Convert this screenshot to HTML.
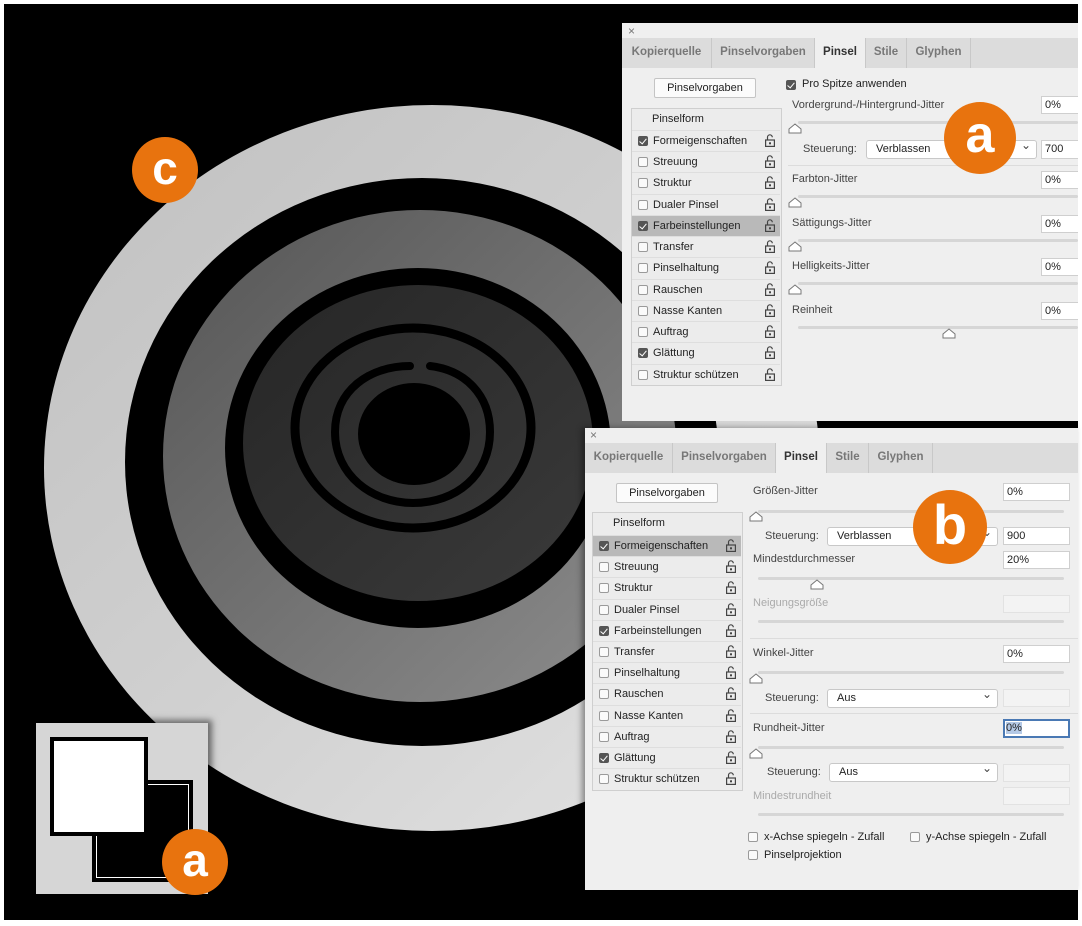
<!DOCTYPE html>
<html><head><meta charset="utf-8"><style>
*{margin:0;padding:0;box-sizing:border-box}
body{width:1082px;height:926px;background:#fff;position:relative;overflow:hidden;font-family:"Liberation Sans",sans-serif;font-size:11px;color:#333}
.a{position:absolute}
.panel{position:absolute;background:#efefef;overflow:hidden}
.tb{position:absolute;top:0;height:100%;background:#dcdcdc;border-right:1px solid #c8c8c8;color:#777;font-weight:bold;font-size:11.5px;text-align:center;line-height:29px}
.tb.on{background:#efefef;color:#333}
.btn{position:absolute;background:#fbfbfb;border:1px solid #c4c4c4;border-radius:2px;text-align:center;line-height:18px;color:#222}
.list{position:absolute;border:1px solid #cfcfcf;background:#ececec}
.r{position:absolute;left:0;width:148px;height:21px;border-top:1px solid #dedede;line-height:20px;padding-left:21px;color:#222}
.r.sel{background:#b9b9b9}
.cb{position:absolute;width:10px;height:10px;border:1px solid #9a9a9a;border-radius:2px;background:#fafafa}
.cb.ck{background:#555;border-color:#555}
.cb.ck:after{content:"";position:absolute;left:2px;top:0px;width:3px;height:6px;border:solid #fff;border-width:0 1.5px 1.5px 0;transform:rotate(40deg)}
.r .cb{left:6px;top:5px}
.lk{position:absolute;right:5px;top:3px}
.lbl{position:absolute;color:#444}
.dis{color:#aaa}
.in{position:absolute;background:#fff;border:1px solid #cfcfcf;padding-left:3px;line-height:16px;color:#222}
.in.d{background:#f3f3f3;border-color:#e2e2e2}
.sl{position:absolute;height:3px;background:#d6d6d6;border-radius:2px}
.th{position:absolute;width:14px;height:11px}
.sel2{position:absolute;background:#fff;border:1px solid #c8c8c8;border-radius:3px;padding-left:9px;line-height:17px;color:#222}
.sel2:after{content:"⌄";position:absolute;right:5px;top:-4px;font-size:12px;color:#444}
.dv{position:absolute;height:1px;background:#dcdcdc}
.or{position:absolute;border-radius:50%;background:#e8730e;color:#fff;font-weight:bold;text-align:center;font-family:"Liberation Sans",sans-serif}
</style></head><body>
<div class="a" style="left:4px;top:4px;width:1074px;height:916px;background:#000"></div>
<svg class="a" style="left:0;top:0" width="1082" height="926">
<defs>
<linearGradient id="g1" x1="0" y1="0" x2="1" y2="1"><stop offset="0" stop-color="#c0c0c0"/><stop offset="0.5" stop-color="#d0d0d0"/><stop offset="1" stop-color="#e4e4e4"/></linearGradient>
<linearGradient id="g2" x1="0" y1="0" x2="1" y2="1"><stop offset="0" stop-color="#555"/><stop offset="1" stop-color="#8e8e8e"/></linearGradient>
<linearGradient id="g3" x1="0" y1="0" x2="1" y2="1"><stop offset="0" stop-color="#262626"/><stop offset="1" stop-color="#3a3a3a"/></linearGradient>
</defs>
<ellipse cx="432" cy="468" rx="388" ry="363" fill="url(#g1)"/>
<ellipse cx="422" cy="462" rx="297" ry="284" fill="#000"/>
<ellipse cx="420" cy="456" rx="257" ry="246" fill="url(#g2)"/>
<ellipse cx="418" cy="448" rx="193" ry="180" fill="#000"/>
<ellipse cx="418" cy="443" rx="175" ry="158" fill="url(#g3)"/>
<ellipse cx="413" cy="428" rx="118" ry="100" fill="none" stroke="#000" stroke-width="9"/>
<path d="M410 366 C370 366 335 390 335 432 C335 475 372 503 413 503 C456 503 490 475 490 432 C490 395 465 370 430 366" fill="none" stroke="#000" stroke-width="8" stroke-linecap="round"/>
<ellipse cx="414" cy="434" rx="56" ry="51" fill="#000"/>
</svg>
<!-- inset -->
<div class="a" style="left:36px;top:723px;width:172px;height:171px;background:#d6d6d6;box-shadow:4px -3px 6px rgba(0,0,0,.5)"></div>
<div class="a" style="left:92px;top:780px;width:101px;height:102px;background:#000"></div>
<div class="a" style="left:96px;top:784px;width:93px;height:94px;border:1.5px solid #fff"></div>
<div class="a" style="left:50px;top:737px;width:98px;height:99px;background:#fff;border:4px solid #000"></div>

<!-- panel 1 -->
<div class="panel" style="left:622px;top:23px;width:456px;height:398px">
 <div class="a" style="left:6px;top:1px;color:#777;font-size:12px">×</div>
 <div class="a" style="left:0;top:15px;width:456px;height:30px;background:#dcdcdc">
  <div class="tb" style="left:0;width:90px">Kopierquelle</div>
  <div class="tb" style="left:90px;width:103px">Pinselvorgaben</div>
  <div class="tb on" style="left:193px;width:51px">Pinsel</div>
  <div class="tb" style="left:244px;width:41px">Stile</div>
  <div class="tb" style="left:285px;width:64px">Glyphen</div>
 </div>
 <div class="btn" style="left:32px;top:55px;width:102px;height:20px">Pinselvorgaben</div>
 <div class="list" style="left:9px;top:85px;width:151px;height:278px">
  <div class="r" style="top:0;border-top:0;padding-left:20px">Pinselform</div>
  <div class="r" style="top:21px"><span class="cb ck"></span>Formeigenschaften<svg class="lk" width="10" height="13"><path d="M2.5 6V3.2a2.4 2.4 0 0 1 4.8 0" fill="none" stroke="#444" stroke-width="1.2"/><rect x="0.6" y="6" width="8.8" height="6.4" fill="none" stroke="#444" stroke-width="1.2"/><rect x="4" y="8.3" width="2" height="2" fill="#444"/></svg></div>
  <div class="r" style="top:42px"><span class="cb"></span>Streuung<svg class="lk" width="10" height="13"><path d="M2.5 6V3.2a2.4 2.4 0 0 1 4.8 0" fill="none" stroke="#444" stroke-width="1.2"/><rect x="0.6" y="6" width="8.8" height="6.4" fill="none" stroke="#444" stroke-width="1.2"/><rect x="4" y="8.3" width="2" height="2" fill="#444"/></svg></div>
  <div class="r" style="top:63px"><span class="cb"></span>Struktur<svg class="lk" width="10" height="13"><path d="M2.5 6V3.2a2.4 2.4 0 0 1 4.8 0" fill="none" stroke="#444" stroke-width="1.2"/><rect x="0.6" y="6" width="8.8" height="6.4" fill="none" stroke="#444" stroke-width="1.2"/><rect x="4" y="8.3" width="2" height="2" fill="#444"/></svg></div>
  <div class="r" style="top:85px"><span class="cb"></span>Dualer Pinsel<svg class="lk" width="10" height="13"><path d="M2.5 6V3.2a2.4 2.4 0 0 1 4.8 0" fill="none" stroke="#444" stroke-width="1.2"/><rect x="0.6" y="6" width="8.8" height="6.4" fill="none" stroke="#444" stroke-width="1.2"/><rect x="4" y="8.3" width="2" height="2" fill="#444"/></svg></div>
  <div class="r sel" style="top:106px"><span class="cb ck"></span>Farbeinstellungen<svg class="lk" width="10" height="13"><path d="M2.5 6V3.2a2.4 2.4 0 0 1 4.8 0" fill="none" stroke="#444" stroke-width="1.2"/><rect x="0.6" y="6" width="8.8" height="6.4" fill="none" stroke="#444" stroke-width="1.2"/><rect x="4" y="8.3" width="2" height="2" fill="#444"/></svg></div>
  <div class="r" style="top:127px"><span class="cb"></span>Transfer<svg class="lk" width="10" height="13"><path d="M2.5 6V3.2a2.4 2.4 0 0 1 4.8 0" fill="none" stroke="#444" stroke-width="1.2"/><rect x="0.6" y="6" width="8.8" height="6.4" fill="none" stroke="#444" stroke-width="1.2"/><rect x="4" y="8.3" width="2" height="2" fill="#444"/></svg></div>
  <div class="r" style="top:148px"><span class="cb"></span>Pinselhaltung<svg class="lk" width="10" height="13"><path d="M2.5 6V3.2a2.4 2.4 0 0 1 4.8 0" fill="none" stroke="#444" stroke-width="1.2"/><rect x="0.6" y="6" width="8.8" height="6.4" fill="none" stroke="#444" stroke-width="1.2"/><rect x="4" y="8.3" width="2" height="2" fill="#444"/></svg></div>
  <div class="r" style="top:170px"><span class="cb"></span>Rauschen<svg class="lk" width="10" height="13"><path d="M2.5 6V3.2a2.4 2.4 0 0 1 4.8 0" fill="none" stroke="#444" stroke-width="1.2"/><rect x="0.6" y="6" width="8.8" height="6.4" fill="none" stroke="#444" stroke-width="1.2"/><rect x="4" y="8.3" width="2" height="2" fill="#444"/></svg></div>
  <div class="r" style="top:191px"><span class="cb"></span>Nasse Kanten<svg class="lk" width="10" height="13"><path d="M2.5 6V3.2a2.4 2.4 0 0 1 4.8 0" fill="none" stroke="#444" stroke-width="1.2"/><rect x="0.6" y="6" width="8.8" height="6.4" fill="none" stroke="#444" stroke-width="1.2"/><rect x="4" y="8.3" width="2" height="2" fill="#444"/></svg></div>
  <div class="r" style="top:212px"><span class="cb"></span>Auftrag<svg class="lk" width="10" height="13"><path d="M2.5 6V3.2a2.4 2.4 0 0 1 4.8 0" fill="none" stroke="#444" stroke-width="1.2"/><rect x="0.6" y="6" width="8.8" height="6.4" fill="none" stroke="#444" stroke-width="1.2"/><rect x="4" y="8.3" width="2" height="2" fill="#444"/></svg></div>
  <div class="r" style="top:233px"><span class="cb ck"></span>Glättung<svg class="lk" width="10" height="13"><path d="M2.5 6V3.2a2.4 2.4 0 0 1 4.8 0" fill="none" stroke="#444" stroke-width="1.2"/><rect x="0.6" y="6" width="8.8" height="6.4" fill="none" stroke="#444" stroke-width="1.2"/><rect x="4" y="8.3" width="2" height="2" fill="#444"/></svg></div>
  <div class="r" style="top:255px"><span class="cb"></span>Struktur schützen<svg class="lk" width="10" height="13"><path d="M2.5 6V3.2a2.4 2.4 0 0 1 4.8 0" fill="none" stroke="#444" stroke-width="1.2"/><rect x="0.6" y="6" width="8.8" height="6.4" fill="none" stroke="#444" stroke-width="1.2"/><rect x="4" y="8.3" width="2" height="2" fill="#444"/></svg></div>
 </div>
 <span class="cb ck" style="left:164px;top:57px"></span>
 <div class="lbl" style="left:180px;top:55px;color:#222">Pro Spitze anwenden</div>
 <div class="lbl" style="left:170px;top:76px">Vordergrund-/Hintergrund-Jitter</div>
 <div class="in" style="left:419px;top:73px;width:40px;height:18px">0%</div>
 <div class="sl" style="left:176px;top:98px;width:280px"></div>
 <svg class="th" style="left:166px;top:100px"><path d="M1 10L1 6 7 1 13 6 13 10Z" fill="#fff" stroke="#777"/></svg>
 <div class="lbl" style="left:181px;top:120px">Steuerung:</div>
 <div class="sel2" style="left:244px;top:117px;width:171px;height:19px">Verblassen</div>
 <div class="in" style="left:419px;top:117px;width:40px;height:19px">700</div>
 <div class="dv" style="left:166px;top:142px;width:290px"></div>
 <div class="lbl" style="left:170px;top:150px">Farbton-Jitter</div>
 <div class="in" style="left:419px;top:148px;width:40px;height:18px">0%</div>
 <div class="sl" style="left:176px;top:172px;width:280px"></div>
 <svg class="th" style="left:166px;top:174px"><path d="M1 10L1 6 7 1 13 6 13 10Z" fill="#fff" stroke="#777"/></svg>
 <div class="lbl" style="left:170px;top:194px">Sättigungs-Jitter</div>
 <div class="in" style="left:419px;top:192px;width:40px;height:18px">0%</div>
 <div class="sl" style="left:176px;top:216px;width:280px"></div>
 <svg class="th" style="left:166px;top:218px"><path d="M1 10L1 6 7 1 13 6 13 10Z" fill="#fff" stroke="#777"/></svg>
 <div class="lbl" style="left:170px;top:237px">Helligkeits-Jitter</div>
 <div class="in" style="left:419px;top:235px;width:40px;height:18px">0%</div>
 <div class="sl" style="left:176px;top:259px;width:280px"></div>
 <svg class="th" style="left:166px;top:261px"><path d="M1 10L1 6 7 1 13 6 13 10Z" fill="#fff" stroke="#777"/></svg>
 <div class="lbl" style="left:170px;top:281px">Reinheit</div>
 <div class="in" style="left:419px;top:279px;width:40px;height:18px">0%</div>
 <div class="sl" style="left:176px;top:303px;width:280px"></div>
 <svg class="th" style="left:320px;top:305px"><path d="M1 10L1 6 7 1 13 6 13 10Z" fill="#fff" stroke="#777"/></svg>
</div>

<!-- panel 2 -->
<div class="panel" style="left:585px;top:428px;width:493px;height:462px;box-shadow:-3px 0 6px rgba(0,0,0,.4)">
 <div class="a" style="left:5px;top:0px;color:#777;font-size:12px">×</div>
 <div class="a" style="left:0;top:15px;width:493px;height:30px;background:#dcdcdc">
  <div class="tb" style="left:0;width:88px">Kopierquelle</div>
  <div class="tb" style="left:88px;width:103px">Pinselvorgaben</div>
  <div class="tb on" style="left:191px;width:51px">Pinsel</div>
  <div class="tb" style="left:242px;width:42px">Stile</div>
  <div class="tb" style="left:284px;width:64px">Glyphen</div>
 </div>
 <div class="btn" style="left:31px;top:55px;width:102px;height:20px">Pinselvorgaben</div>
 <div class="list" style="left:7px;top:84px;width:151px;height:279px">
  <div class="r" style="top:0;border-top:0;padding-left:20px">Pinselform</div>
  <div class="r sel" style="top:22px"><span class="cb ck"></span>Formeigenschaften<svg class="lk" width="10" height="13"><path d="M2.5 6V3.2a2.4 2.4 0 0 1 4.8 0" fill="none" stroke="#444" stroke-width="1.2"/><rect x="0.6" y="6" width="8.8" height="6.4" fill="none" stroke="#444" stroke-width="1.2"/><rect x="4" y="8.3" width="2" height="2" fill="#444"/></svg></div>
  <div class="r" style="top:43px"><span class="cb"></span>Streuung<svg class="lk" width="10" height="13"><path d="M2.5 6V3.2a2.4 2.4 0 0 1 4.8 0" fill="none" stroke="#444" stroke-width="1.2"/><rect x="0.6" y="6" width="8.8" height="6.4" fill="none" stroke="#444" stroke-width="1.2"/><rect x="4" y="8.3" width="2" height="2" fill="#444"/></svg></div>
  <div class="r" style="top:64px"><span class="cb"></span>Struktur<svg class="lk" width="10" height="13"><path d="M2.5 6V3.2a2.4 2.4 0 0 1 4.8 0" fill="none" stroke="#444" stroke-width="1.2"/><rect x="0.6" y="6" width="8.8" height="6.4" fill="none" stroke="#444" stroke-width="1.2"/><rect x="4" y="8.3" width="2" height="2" fill="#444"/></svg></div>
  <div class="r" style="top:86px"><span class="cb"></span>Dualer Pinsel<svg class="lk" width="10" height="13"><path d="M2.5 6V3.2a2.4 2.4 0 0 1 4.8 0" fill="none" stroke="#444" stroke-width="1.2"/><rect x="0.6" y="6" width="8.8" height="6.4" fill="none" stroke="#444" stroke-width="1.2"/><rect x="4" y="8.3" width="2" height="2" fill="#444"/></svg></div>
  <div class="r" style="top:107px"><span class="cb ck"></span>Farbeinstellungen<svg class="lk" width="10" height="13"><path d="M2.5 6V3.2a2.4 2.4 0 0 1 4.8 0" fill="none" stroke="#444" stroke-width="1.2"/><rect x="0.6" y="6" width="8.8" height="6.4" fill="none" stroke="#444" stroke-width="1.2"/><rect x="4" y="8.3" width="2" height="2" fill="#444"/></svg></div>
  <div class="r" style="top:128px"><span class="cb"></span>Transfer<svg class="lk" width="10" height="13"><path d="M2.5 6V3.2a2.4 2.4 0 0 1 4.8 0" fill="none" stroke="#444" stroke-width="1.2"/><rect x="0.6" y="6" width="8.8" height="6.4" fill="none" stroke="#444" stroke-width="1.2"/><rect x="4" y="8.3" width="2" height="2" fill="#444"/></svg></div>
  <div class="r" style="top:149px"><span class="cb"></span>Pinselhaltung<svg class="lk" width="10" height="13"><path d="M2.5 6V3.2a2.4 2.4 0 0 1 4.8 0" fill="none" stroke="#444" stroke-width="1.2"/><rect x="0.6" y="6" width="8.8" height="6.4" fill="none" stroke="#444" stroke-width="1.2"/><rect x="4" y="8.3" width="2" height="2" fill="#444"/></svg></div>
  <div class="r" style="top:170px"><span class="cb"></span>Rauschen<svg class="lk" width="10" height="13"><path d="M2.5 6V3.2a2.4 2.4 0 0 1 4.8 0" fill="none" stroke="#444" stroke-width="1.2"/><rect x="0.6" y="6" width="8.8" height="6.4" fill="none" stroke="#444" stroke-width="1.2"/><rect x="4" y="8.3" width="2" height="2" fill="#444"/></svg></div>
  <div class="r" style="top:192px"><span class="cb"></span>Nasse Kanten<svg class="lk" width="10" height="13"><path d="M2.5 6V3.2a2.4 2.4 0 0 1 4.8 0" fill="none" stroke="#444" stroke-width="1.2"/><rect x="0.6" y="6" width="8.8" height="6.4" fill="none" stroke="#444" stroke-width="1.2"/><rect x="4" y="8.3" width="2" height="2" fill="#444"/></svg></div>
  <div class="r" style="top:213px"><span class="cb"></span>Auftrag<svg class="lk" width="10" height="13"><path d="M2.5 6V3.2a2.4 2.4 0 0 1 4.8 0" fill="none" stroke="#444" stroke-width="1.2"/><rect x="0.6" y="6" width="8.8" height="6.4" fill="none" stroke="#444" stroke-width="1.2"/><rect x="4" y="8.3" width="2" height="2" fill="#444"/></svg></div>
  <div class="r" style="top:234px"><span class="cb ck"></span>Glättung<svg class="lk" width="10" height="13"><path d="M2.5 6V3.2a2.4 2.4 0 0 1 4.8 0" fill="none" stroke="#444" stroke-width="1.2"/><rect x="0.6" y="6" width="8.8" height="6.4" fill="none" stroke="#444" stroke-width="1.2"/><rect x="4" y="8.3" width="2" height="2" fill="#444"/></svg></div>
  <div class="r" style="top:255px"><span class="cb"></span>Struktur schützen<svg class="lk" width="10" height="13"><path d="M2.5 6V3.2a2.4 2.4 0 0 1 4.8 0" fill="none" stroke="#444" stroke-width="1.2"/><rect x="0.6" y="6" width="8.8" height="6.4" fill="none" stroke="#444" stroke-width="1.2"/><rect x="4" y="8.3" width="2" height="2" fill="#444"/></svg></div>
 </div>
 <div class="lbl" style="left:168px;top:57px">Größen-Jitter</div>
 <div class="in" style="left:418px;top:55px;width:67px;height:18px">0%</div>
 <div class="sl" style="left:173px;top:82px;width:306px"></div>
 <svg class="th" style="left:164px;top:83px"><path d="M1 10L1 6 7 1 13 6 13 10Z" fill="#fff" stroke="#777"/></svg>
 <div class="lbl" style="left:180px;top:102px">Steuerung:</div>
 <div class="sel2" style="left:242px;top:99px;width:171px;height:19px">Verblassen</div>
 <div class="in" style="left:418px;top:99px;width:67px;height:18px">900</div>
 <div class="lbl" style="left:168px;top:125px">Mindestdurchmesser</div>
 <div class="in" style="left:418px;top:123px;width:67px;height:18px">20%</div>
 <div class="sl" style="left:173px;top:149px;width:306px"></div>
 <svg class="th" style="left:225px;top:151px"><path d="M1 10L1 6 7 1 13 6 13 10Z" fill="#fff" stroke="#777"/></svg>
 <div class="lbl dis" style="left:168px;top:169px">Neigungsgröße</div>
 <div class="in d" style="left:418px;top:167px;width:67px;height:18px"></div>
 <div class="sl" style="left:173px;top:192px;width:306px"></div>
 <div class="dv" style="left:165px;top:210px;width:328px"></div>
 <div class="lbl" style="left:168px;top:219px">Winkel-Jitter</div>
 <div class="in" style="left:418px;top:217px;width:67px;height:18px">0%</div>
 <div class="sl" style="left:173px;top:243px;width:306px"></div>
 <svg class="th" style="left:164px;top:245px"><path d="M1 10L1 6 7 1 13 6 13 10Z" fill="#fff" stroke="#777"/></svg>
 <div class="lbl" style="left:180px;top:264px">Steuerung:</div>
 <div class="sel2" style="left:242px;top:261px;width:171px;height:19px">Aus</div>
 <div class="in d" style="left:418px;top:261px;width:67px;height:18px"></div>
 <div class="dv" style="left:165px;top:285px;width:328px"></div>
 <div class="lbl" style="left:168px;top:294px">Rundheit-Jitter</div>
 <div class="in" style="left:418px;top:291px;width:67px;height:19px;border:2px solid #4a79b4;line-height:14px;padding-left:1px"><span style="background:#b4c9e6">0%</span></div>
 <div class="sl" style="left:173px;top:318px;width:306px"></div>
 <svg class="th" style="left:164px;top:320px"><path d="M1 10L1 6 7 1 13 6 13 10Z" fill="#fff" stroke="#777"/></svg>
 <div class="lbl" style="left:182px;top:338px">Steuerung:</div>
 <div class="sel2" style="left:244px;top:335px;width:169px;height:19px">Aus</div>
 <div class="in d" style="left:418px;top:336px;width:67px;height:18px"></div>
 <div class="lbl dis" style="left:168px;top:362px">Mindestrundheit</div>
 <div class="in d" style="left:418px;top:359px;width:67px;height:18px"></div>
 <div class="sl" style="left:173px;top:385px;width:306px"></div>
 <span class="cb" style="left:163px;top:404px"></span>
 <div class="lbl" style="left:179px;top:403px;color:#222">x-Achse spiegeln - Zufall</div>
 <span class="cb" style="left:325px;top:404px"></span>
 <div class="lbl" style="left:341px;top:403px;color:#222">y-Achse spiegeln - Zufall</div>
 <span class="cb" style="left:163px;top:422px"></span>
 <div class="lbl" style="left:179px;top:421px;color:#222">Pinselprojektion</div>
</div>

<div class="or" style="left:132px;top:137px;width:66px;height:66px;font-size:46px;line-height:62px">c</div>
<div class="or" style="left:944px;top:102px;width:72px;height:72px;font-size:52px;line-height:66px">a</div>
<div class="or" style="left:913px;top:490px;width:74px;height:74px;font-size:56px;line-height:70px">b</div>
<div class="or" style="left:162px;top:829px;width:66px;height:66px;font-size:46px;line-height:62px">a</div>
</body></html>
